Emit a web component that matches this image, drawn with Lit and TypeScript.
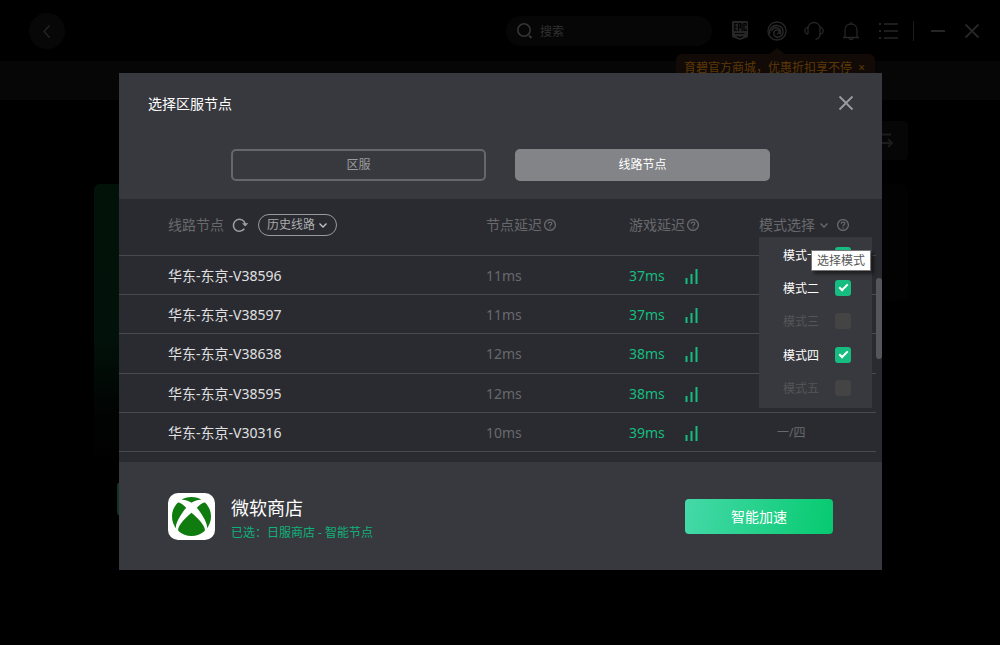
import { LitElement, html, css, svg } from "lit";
import { customElement, property, state } from "lit/decorators.js";

interface NodeRow {
  name: string;
  nodeDelay: string;
  gameDelay: string;
  mode: string;
}

interface Mode {
  id: string;
  label: string;
  checked: boolean;
  disabled: boolean;
}

const ICONS: Record<string, unknown> = {
  back: svg`<path d="M11.5 3.5 6 9.5l5.500 6" />`,
  search: svg`<circle cx="8" cy="8" r="6.2" stroke-width="1.6"/><path d="m13 13.5 2.5 2.5" stroke-width="2"/>`,
  epic: svg`<path fill="currentColor" stroke="none" d="M2 0h14a1 1 0 0 1 1 1v15l-8 3-8-3V1a1 1 0 0 1 1-1z"/>
    <g stroke="#000" stroke-width="1.2"><path d="M6 2.500H3.800V9.500H6M3.800 6h2M7.500 10V2.500H9.300V6.600H7.500M11 2.500V10M15 5V2.500H13V9.500h2V7.500"/><path d="M4 12.500h10" stroke-dasharray="2 .5"/><path d="M6 15.300l3 1.200 3-1.200"/></g>`,
  ubi: svg`<circle cx="9.500" cy="9.500" r="8.600"/><path d="M2.600 12.500C1.500 6.500 6 3.800 10 4.200c4 .4 6 4 5.200 7.300-.8 3-4 4.500-6.600 3.500-2.400-1-3-4-1.300-5.700 1.500-1.400 4-.8 4.200 1 .2 1.300-1 2-2 1.600M4.300 9.500c.8-2.800 3.800-3.800 6-2.800 2.600 1.100 3.400 3.900 2 6" stroke-width="1.500"/>`,
  headset: svg`<path d="M4 13V7.500C4 4 6.500 1.500 10 1.500S16 4 16 7.500V13c0 3-1.500 4.800-4.500 5.300M4 6.500H3C1.500 7 .8 8.300.8 9.800S1.500 12.500 3 13h1M16 6.500h1c1.500.5 2.200 1.800 2.200 3.300S18.500 12.500 17 13h-1"/>`,
  bell: svg`<path d="M9 0v2M1 15.500h16M3 15.500V8c0-3.500 2.500-6 6-6s6 2.500 6 6v7.500M7 16c0 2 4 2 4 0"/>`,
  list: svg`<path d="M6 3h14M6 10h14M6 17h14"/><path d="M1 3h2M1 10h2M1 17h2" stroke-width="2"/>`,
  minus: svg`<path d="M2 9h14" stroke-width="2"/>`,
  close: svg`<path d="m2.500 2.500 13 13m0-13-13 13" stroke-width="1.800"/>`,
  swap: svg`<path d="M2 2.500h13M2 11h14m-4-4 4 4-4 4" stroke-width="2"/>`,
  refresh: svg`<path d="M12.300 11.800A6 6 0 1 1 13.300 7" stroke-width="1.600"/><path d="M10 6.300h6.200L13.200 9.600z" fill="currentColor" stroke="none"/>`,
  chevron: svg`<path d="m1.500 3.500 3.500 3.500 3.500-3.500" stroke-width="1.300"/>`,
  help: svg`<circle cx="6" cy="6" r="5.400"/><path d="M4.200 4.800C4.200 2.500 7.900 2.600 7.800 4.700 7.700 5.800 6 5.800 6 7.300M6 8.300v1.200" stroke-width="1.200"/>`,
  signal: svg`<path d="M1.500 10v6M6.500 6v10M11.500 1v15" stroke-width="2"/>`,
  xbox: svg`<path fill="currentColor" stroke="none" d="M4.102 21.033C6.211 22.881 8.977 24 12 24c3.026 0 5.789-1.119 7.902-2.967 1.877-1.912-4.316-8.709-7.902-11.417-3.582 2.708-9.779 9.505-7.898 11.417zm11.160-14.406c2.500 2.961 7.484 10.313 6.076 12.912C23.002 17.480 24 14.861 24 12.004c0-3.340-1.365-6.362-3.570-8.536 0 0-.027-.022-.082-.042-.063-.022-.152-.045-.281-.045-.592 0-1.985.434-4.805 3.246zM3.654 3.426c-.057.020-.082.041-.086.042C1.365 5.642 0 8.664 0 12.004c0 2.854.998 5.473 2.661 7.533-1.401-2.605 3.579-9.951 6.080-12.910-2.820-2.813-4.216-3.245-4.806-3.245-.131 0-.223.021-.281.046v-.002zM12 3.551S9.055 1.828 6.755 1.746c-.903-.033-1.454.295-1.521.339C7.379.646 9.659 0 11.984 0H12c2.334 0 4.605.646 6.766 2.085-.068-.046-.615-.372-1.520-.339C14.946 1.828 12 3.545 12 3.545v.006z"/>`,
};

@customElement("ui-icon")
export class UiIcon extends LitElement {
  @property() name = "";
  @property() box = "0 0 18 18";

  static styles = css`
    :host {
      display: block;
      flex: none;
    }
    svg {
      display: block;
      width: 100%;
      height: 100%;
    }
  `;

  render() {
    return html`<svg viewBox=${this.box} fill="none" stroke="currentColor" stroke-width="1.3" aria-hidden="true">
      ${ICONS[this.name]}
    </svg>`;
  }
}

@customElement("app-root")
export class AppRoot extends LitElement {
  @state() private rows: NodeRow[] = [
    { name: "华东-东京-V38596", nodeDelay: "11ms", gameDelay: "37ms", mode: "" },
    { name: "华东-东京-V38597", nodeDelay: "11ms", gameDelay: "37ms", mode: "" },
    { name: "华东-东京-V38638", nodeDelay: "12ms", gameDelay: "38ms", mode: "" },
    { name: "华东-东京-V38595", nodeDelay: "12ms", gameDelay: "38ms", mode: "" },
    { name: "华东-东京-V30316", nodeDelay: "10ms", gameDelay: "39ms", mode: "一/四" },
  ];

  @state() private modes: Mode[] = [
    { id: "m1", label: "模式一", checked: true, disabled: false },
    { id: "m2", label: "模式二", checked: true, disabled: false },
    { id: "m3", label: "模式三", checked: false, disabled: true },
    { id: "m4", label: "模式四", checked: true, disabled: false },
    { id: "m5", label: "模式五", checked: false, disabled: true },
  ];

  static styles = css`
    :host {
      display: block;
      position: relative;
      min-height: 100vh;
      overflow: hidden;
      background: #000;
      font-family: "Noto Sans", "Noto Sans CJK SC", sans-serif;
      font-size: 14px;
      line-height: 20px;
      color: #fff;
    }
    * {
      box-sizing: border-box;
    }
    button,
    input,
    select {
      font: inherit;
      color: inherit;
      margin: 0;
      padding: 0;
      border: 0;
      background: none;
    }
    h1,
    h2,
    p {
      margin: 0;
      font-weight: 400;
    }
    .i10 { width: 10px; height: 10px; }
    .i12 { width: 12px; height: 12px; }
    .i16 { width: 16px; height: 16px; }
    .i18 { width: 18px; height: 18px; }
    .i20 { width: 20px; height: 20px; }

    /* window behind the dialog */
    .topbar {
      display: flex;
      align-items: center;
      height: 61px;
      padding: 0 19px 0 29px;
      color: #262626;
    }
    .back {
      display: grid;
      place-items: center;
      width: 36px;
      height: 36px;
      margin-right: auto;
      border-radius: 50%;
      background: #070707;
    }
    .search {
      display: flex;
      align-items: center;
      gap: 6px;
      width: 206px;
      height: 30px;
      padding: 0 10px;
      border-radius: 15px;
      background: #060606;
      font-size: 12px;
      color: #353535;
    }
    .search input {
      flex: 1;
      min-width: 0;
      padding-top: 2px;
      outline: 0;
    }
    .search input::placeholder {
      color: #303030;
      opacity: 1;
    }
    .tools {
      display: flex;
      align-items: center;
      gap: 17px;
      margin-left: 18px;
    }
    .tool {
      display: flex;
      position: relative;
    }
    .windowctl {
      display: flex;
      align-items: center;
      gap: 16px;
      height: 20px;
      margin-left: 15px;
      padding-left: 15px;
      border-left: 1px solid #1c1c1c;
    }
    .promo {
      position: absolute;
      top: 33px;
      right: -88px;
      display: flex;
      gap: 6px;
      height: 34px;
      padding: 4px 10px 0 8px;
      border-radius: 6px;
      background: #110a06;
      color: #5e3907;
      font-size: 12px;
      white-space: nowrap;
    }
    .promo::before {
      content: "";
      position: absolute;
      top: -6px;
      right: 90px;
      border: 8px solid transparent;
      border-top: 0;
      border-bottom: 6px solid #110a06;
    }
    .band {
      height: 39px;
      background: #060606;
    }
    .content {
      display: flex;
      justify-content: space-between;
      padding: 21px 92px 0 94px;
    }
    .poster {
      width: 240px;
      height: 273px;
      margin-top: 63px;
      border-radius: 6px;
      background: linear-gradient(#021208, #02120a 55%, #010302 85%, #010101);
    }
    .play {
      width: 194px;
      height: 34px;
      margin: 25px 23px 0;
      border-radius: 4px;
      background: #0f3325;
    }
    .swap {
      display: flex;
      justify-content: flex-end;
      align-items: center;
      width: 150px;
      height: 39px;
      padding-right: 14px;
      border-radius: 4px;
      background: #060606;
      color: #1c1c1c;
    }
    .side {
      height: 117px;
      margin-top: 24px;
      border-radius: 6px;
      background: #020203;
    }

    /* dialog */
    .overlay {
      position: absolute;
      inset: 0;
      padding: 73px 118px 75px 119px;
    }
    .dialog {
      display: flex;
      flex-direction: column;
      background: #38393e;
    }
    .head {
      padding: 20px 27px 18px 29px;
    }
    .titlebar {
      display: flex;
      justify-content: space-between;
      align-items: center;
      height: 20px;
    }
    .titlebar h1 {
      font-size: 14px;
      padding-top: 2px;
    }
    .close {
      color: #9b9c9f;
    }
    .tabs {
      display: grid;
      grid-template-columns: 1fr 1fr;
      gap: 29px;
      margin: 36px 85px 0 83px;
    }
    .tab {
      height: 32px;
      border: 2px solid #66676a;
      border-radius: 5px;
      font-size: 12px;
      color: #9c9c9f;
    }
    .tab.on {
      background: #838487;
      border-color: #838487;
      color: #fff;
    }
    .list {
      position: relative;
      padding: 0 6px 10px 0;
      background: #2a2b30;
    }
    .thumb {
      position: absolute;
      top: 79px;
      right: 0;
      width: 6px;
      height: 81px;
      border-radius: 3px;
      background: #55565b;
    }
    table,
    thead {
      display: block;
    }
    tbody {
      display: grid;
      grid-auto-rows: 1fr;
      height: 196px;
    }
    tr {
      display: grid;
      grid-template-columns: 318fr 143fr 130fr 117fr;
      align-items: center;
      padding-left: 49px;
      border-bottom: 1px solid #494a4e;
    }
    thead tr {
      height: 57px;
    }
    th,
    td {
      display: flex;
      align-items: center;
      padding: 0;
      font-weight: 400;
      text-align: left;
      color: #68696d;
    }
    td {
      padding-top: 2px;
    }
    thead th {
      position: relative;
      gap: 2px;
      padding-bottom: 4px;
    }
    .name {
      color: #e0e0e2;
    }
    .game {
      gap: 20px;
      color: #16bd7f;
    }
    .bars {
      width: 14px;
      height: 16px;
    }
    .mode {
      padding-left: 18px;
      font-size: 12px;
    }
    .reload {
      margin: 0 8px 0 6px;
      color: #9c9da0;
    }
    .history {
      display: flex;
      align-items: center;
      position: relative;
      height: 22px;
      border: 1px solid #98999c;
      border-radius: 11px;
      font-size: 12px;
      color: #a9aaad;
    }
    .history select {
      appearance: none;
      height: 20px;
      padding: 0 20px 0 8px;
      border-radius: 10px;
      outline: 0;
    }
    .history ui-icon {
      position: absolute;
      right: 8px;
      pointer-events: none;
      color: #c4c5c7;
    }
    .modebtn {
      display: flex;
      align-items: center;
      gap: 4px;
      margin-right: 6px;
    }
    .menu {
      position: absolute;
      z-index: 1;
      top: 22px;
      left: 0;
      right: 4px;
      display: grid;
      grid-auto-rows: 1fr;
      height: 171px;
      padding: 1px 0 3px;
      background: #38393e;
      font-size: 12px;
      color: #fff;
    }
    .option {
      display: flex;
      align-items: center;
      gap: 16px;
      padding-left: 24px;
    }
    .option span {
      padding-top: 2px;
    }
    .option.off {
      color: #545558;
    }
    .option input {
      appearance: none;
      display: grid;
      place-items: center;
      width: 16px;
      height: 16px;
      border-radius: 3px;
      background: #444445;
    }
    .option input:checked {
      background: #17bd80;
    }
    .option input:checked::before {
      content: "";
      width: 9px;
      height: 5px;
      margin-bottom: 3px;
      box-sizing: border-box;
      border: solid #fff;
      border-width: 0 0 2px 2px;
      transform: rotate(-45deg);
    }
    .tip {
      position: absolute;
      z-index: 2;
      top: 35px;
      left: 52px;
      height: 21px;
      padding: 0 5px;
      border: 1px solid #767676;
      background: #fff;
      box-shadow: 3px 3px 3px rgba(0, 0, 0, 0.45);
      font-size: 12px;
      line-height: 19px;
      color: #575757;
      white-space: nowrap;
    }
    .foot {
      display: flex;
      align-items: center;
      gap: 16px;
      height: 108px;
      padding: 0 49px;
    }
    .logo {
      display: grid;
      place-items: center;
      width: 47px;
      height: 47px;
      border-radius: 10px;
      background: #fff;
      color: #107c10;
    }
    .logo ui-icon {
      width: 39px;
      height: 39px;
    }
    .info {
      flex: 1;
      padding-top: 4px;
    }
    .info h2 {
      font-size: 18px;
      line-height: 30px;
    }
    .info p {
      font-size: 12px;
      color: #10b17a;
    }
    .go {
      width: 148px;
      height: 35px;
      padding-top: 2px;
      border-radius: 4px;
      background: linear-gradient(100deg, #45d9a9, #06ca6f);
      color: #fff;
    }
  `;

  private toggleMode(id: string) {
    this.modes = this.modes.map((m) => (m.id === id ? { ...m, checked: !m.checked } : m));
  }

  private renderWindow() {
    return html`
      <header class="topbar">
        <button class="back" aria-label="返回"><ui-icon class="i18" name="back"></ui-icon></button>
        <label class="search">
          <ui-icon class="i18" name="search"></ui-icon>
          <input type="search" placeholder="搜索" aria-label="搜索" />
        </label>
        <nav class="tools">
          <button class="tool" aria-label="Epic"><ui-icon class="i20" name="epic" box="-1 0 20 20"></ui-icon></button>
          <div class="tool">
            <button aria-label="Ubisoft"><ui-icon class="i20" name="ubi" box="0 0 19 19"></ui-icon></button>
            <div class="promo">
              <span>育碧官方商城，优惠折扣享不停</span>
              <span>×</span>
            </div>
          </div>
          <button class="tool" aria-label="客服"><ui-icon class="i20" name="headset" box="0 0 20 20"></ui-icon></button>
          <button class="tool" aria-label="通知"><ui-icon class="i20" name="bell" box="-1 -1 20 20"></ui-icon></button>
          <button class="tool" aria-label="菜单"><ui-icon class="i20" name="list" box="0 0 20 20"></ui-icon></button>
        </nav>
        <div class="windowctl">
          <button aria-label="最小化"><ui-icon class="i18" name="minus"></ui-icon></button>
          <button aria-label="关闭"><ui-icon class="i18" name="close"></ui-icon></button>
        </div>
      </header>
      <div class="band"></div>
      <div class="content">
        <div>
          <div class="poster"></div>
          <div class="play"></div>
        </div>
        <div>
          <div class="swap"><ui-icon class="i18" name="swap"></ui-icon></div>
          <div class="side"></div>
        </div>
      </div>
    `;
  }

  private renderModeHeader() {
    return html`
      <th scope="col">
        <button class="modebtn" aria-expanded="true">
          模式选择<ui-icon class="i10" name="chevron" box="0 0 10 10"></ui-icon>
        </button>
        <ui-icon class="i12" name="help" box="0 0 12 12"></ui-icon>
        <div class="menu">
          ${this.modes.map(
            (m) => html`<label class="option ${m.disabled ? "off" : ""}">
              <span>${m.label}</span>
              <input
                type="checkbox"
                .checked=${m.checked}
                ?disabled=${m.disabled}
                @change=${() => this.toggleMode(m.id)}
              />
            </label>`,
          )}
        </div>
        <div class="tip" role="tooltip">选择模式</div>
      </th>
    `;
  }

  render() {
    return html`
      ${this.renderWindow()}
      <div class="overlay">
        <section class="dialog" role="dialog" aria-labelledby="title">
          <div class="head">
            <div class="titlebar">
              <h1 id="title">选择区服节点</h1>
              <button class="close" aria-label="关闭"><ui-icon class="i18" name="close"></ui-icon></button>
            </div>
            <div class="tabs" role="tablist">
              <button class="tab" role="tab" aria-selected="false">区服</button>
              <button class="tab on" role="tab" aria-selected="true">线路节点</button>
            </div>
          </div>
          <div class="list">
            <table>
              <thead>
                <tr>
                  <th scope="col">
                    线路节点
                    <button class="reload" aria-label="刷新">
                      <ui-icon class="i16" name="refresh" box="0 0 16 16"></ui-icon>
                    </button>
                    <label class="history">
                      <select aria-label="历史线路">
                        <option>历史线路</option>
                      </select>
                      <ui-icon class="i10" name="chevron" box="0 0 10 10"></ui-icon>
                    </label>
                  </th>
                  <th scope="col">节点延迟<ui-icon class="i12" name="help" box="0 0 12 12"></ui-icon></th>
                  <th scope="col">游戏延迟<ui-icon class="i12" name="help" box="0 0 12 12"></ui-icon></th>
                  ${this.renderModeHeader()}
                </tr>
              </thead>
              <tbody>
                ${this.rows.map(
                  (r) => html`<tr>
                    <td class="name">${r.name}</td>
                    <td>${r.nodeDelay}</td>
                    <td class="game">
                      ${r.gameDelay}<ui-icon class="bars" name="signal" box="0 0 14 16"></ui-icon>
                    </td>
                    <td class="mode">${r.mode}</td>
                  </tr>`,
                )}
              </tbody>
            </table>
            <div class="thumb"></div>
          </div>
          <footer class="foot">
            <div class="logo"><ui-icon name="xbox" box="0 0 24 24"></ui-icon></div>
            <div class="info">
              <h2>微软商店</h2>
              <p>已选：日服商店 - 智能节点</p>
            </div>
            <button class="go">智能加速</button>
          </footer>
        </section>
      </div>
    `;
  }
}
